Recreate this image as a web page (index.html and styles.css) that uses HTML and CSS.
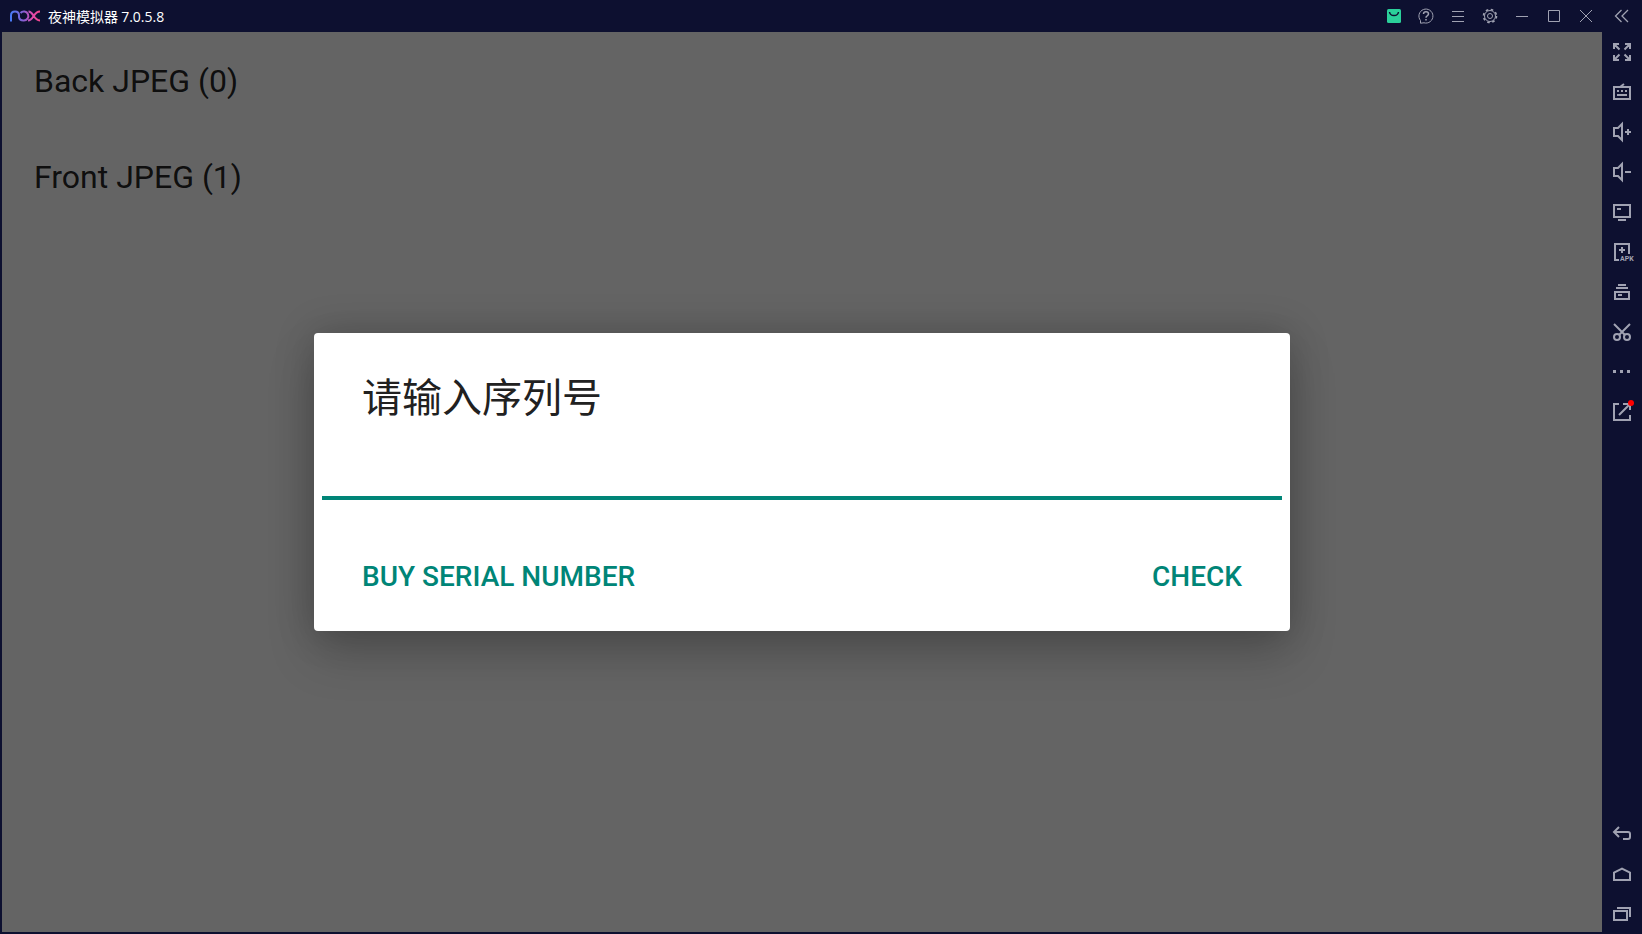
FILE: index.html
```html
<!DOCTYPE html>
<html lang="zh-CN">
<head>
    <meta charset="UTF-8">
    <meta name="viewport" content="width=device-width, initial-scale=1.0">
    <title>夜神模拟器 7.0.5.8</title>
    <link rel="stylesheet" href="styles.css">
</head>
<body>
    <header class="titlebar">
        <svg class="logo" viewBox="0 0 32 14" aria-hidden="true">
            <defs>
                <linearGradient id="nox" gradientUnits="userSpaceOnUse" x1="0" y1="0" x2="32" y2="0">
                    <stop offset="0" stop-color="#3a80ff"/>
                    <stop offset="0.5" stop-color="#8a5fd0"/>
                    <stop offset="0.75" stop-color="#e04aac"/>
                    <stop offset="1" stop-color="#f8468c"/>
                </linearGradient>
            </defs>
            <path d="M3 12.500V6.500Q3 2.500 7 2.500T11 6.500V8Q11.500 11.500 15.500 11.500A4.500 4.500 0 1 0 12.500 4M20.500 2.500C26 2.500 25 11.500 32 11.500M32 2.500C25 2.500 26 11.500 20 11.500" fill="none" stroke="url(#nox)" stroke-width="2"/>
        </svg>
        <h1 class="app-name">夜神模拟器 <span class="version">7.0.5.8</span></h1>
        <div class="window-buttons">
            <button type="button" aria-label="应用中心">
                <svg viewBox="0 0 20 20"><rect x="3" y="3" width="14" height="14" rx="1.500" fill="#2bd09a"/><path d="M5.500 6Q6 9.500 10 9.500T14.500 6" fill="none" stroke="#0d1030" stroke-width="1.500"/></svg>
            </button>
            <button type="button" aria-label="帮助">
                <svg class="thin" viewBox="0 0 20 20"><path d="M4.500 14.500A7 7 0 1 1 8 16.800L4.500 17.200Z"/><path d="M7.500 8Q7.500 5.800 10 5.800T12.500 8Q12.500 9 11.200 9.800Q10 10.500 10 11.800M10 13V14.500" stroke-width="1.500"/></svg>
            </button>
            <button type="button" aria-label="菜单">
                <svg class="thin" viewBox="0 0 20 20"><path d="M4 5.500H16M4 10.500H16M4 15.500H16"/></svg>
            </button>
            <button type="button" aria-label="设置">
                <svg class="thin" viewBox="0 0 20 20"><circle cx="10" cy="10" r="5.500"/><circle cx="10" cy="10" r="2.500"/><circle cx="10" cy="10" r="6.500" stroke-width="1.600" stroke-dasharray="2.550 2.555"/></svg>
            </button>
            <button type="button" aria-label="最小化">
                <svg class="thin" viewBox="0 0 20 20"><path d="M4 10.500H16"/></svg>
            </button>
            <button type="button" aria-label="最大化">
                <svg class="thin" viewBox="0 0 20 20"><path d="M4.500 4.500H15.500V15.500H4.500Z"/></svg>
            </button>
            <button type="button" aria-label="关闭">
                <svg class="thin" viewBox="0 0 20 20"><path d="M4 4L16 16M16 4L4 16"/></svg>
            </button>
            <button type="button" class="collapse" aria-label="收起侧栏">
                <svg class="thin" viewBox="0 0 20 20"><path d="M9.500 4L3.500 10L9.500 16M16 4L10 10L16 16" stroke-width="1.300"/></svg>
            </button>
        </div>
    </header>

    <div class="workspace">
        <main class="screen">
            <ul class="camera-list">
                <li>Back JPEG (0)</li>
                <li>Front JPEG (1)</li>
            </ul>

            <div class="overlay">
                <form class="dialog" role="dialog" aria-labelledby="dialog-title">
                    <label class="dialog-title" id="dialog-title" for="serial">请输入序列号</label>
                    <input class="serial-input" id="serial" type="text">
                    <div class="dialog-actions">
                        <button type="button">BUY SERIAL NUMBER</button>
                        <button type="button">CHECK</button>
                    </div>
                </form>
            </div>
        </main>

        <aside class="sidebar">
            <button type="button" aria-label="全屏">
                <svg viewBox="0 0 20 20"><path d="M2 7V2H7M2 2L7.500 7.500M13 2H18V7M18 2L12.500 7.500M2 13V18H7M2 18L7.500 12.500M18 13V18H13M18 18L12.500 12.500"/></svg>
            </button>
            <button type="button" aria-label="按键设置">
                <svg viewBox="0 0 20 20"><path d="M2 5H18V17H2ZM8 5L12 2M5 9H7M9 9H11M13 9H15M5 13H15"/></svg>
            </button>
            <button type="button" aria-label="音量加">
                <svg viewBox="0 0 20 20"><path d="M10 2V18L6 14H2V6H6ZM13 10H19M16 7V13"/></svg>
            </button>
            <button type="button" aria-label="音量减">
                <svg viewBox="0 0 20 20"><path d="M10 2V18L6 14H2V6H6ZM13 10H19"/></svg>
            </button>
            <button type="button" aria-label="虚拟屏幕">
                <svg viewBox="0 0 20 20"><path d="M2 3H18V15H2ZM5 7H9M6 18H14"/></svg>
            </button>
            <button type="button" aria-label="安装 APK">
                <svg viewBox="0 0 20 20"><path d="M7 18H3V2H17V12M10 5V11M7 8H13"/><text class="apk" x="8" y="19">APK</text></svg>
            </button>
            <button type="button" aria-label="多开">
                <svg viewBox="0 0 20 20"><path d="M6 3H14M4 6H16M3 10H17V17H3ZM6 13H10"/></svg>
            </button>
            <button type="button" aria-label="截图">
                <svg viewBox="0 0 20 20"><path d="M2 2L13 13M18 2L7 13"/><circle cx="5" cy="15" r="3"/><circle cx="15" cy="15" r="3"/></svg>
            </button>
            <button type="button" aria-label="更多">
                <svg viewBox="0 0 20 20"><path d="M1 9.500H4M8 9.500H11M15 9.500H18" stroke-width="3"/></svg>
            </button>
            <button type="button" aria-label="分享">
                <svg viewBox="0 0 20 20"><path d="M7 2H2V18H18V13M11 2H18V8M7 13L17 3"/><circle class="dot" cx="19" cy="1" r="3"/></svg>
            </button>
            <button type="button" class="nav-first" aria-label="返回">
                <svg viewBox="0 0 20 20"><path d="M7 3L2 8L7 13M2 8H16Q18 8 18 10V13Q18 15 16 15H11"/></svg>
            </button>
            <button type="button" aria-label="主页">
                <svg viewBox="0 0 20 20"><path d="M2 16V8.500L10 4.500L18 8.500V16Z"/></svg>
            </button>
            <button type="button" aria-label="最近任务">
                <svg viewBox="0 0 20 20"><path d="M2 7H15V16H2ZM5 4H18V13"/></svg>
            </button>
        </aside>
    </div>
</body>
</html>
```

FILE: styles.css
```css
* {
    box-sizing: border-box;
}
body {
    margin: 0;
    min-height: 100vh;
    display: flex;
    flex-direction: column;
    background: #0d1030;
    font-family: Roboto, "Noto Sans CJK SC", sans-serif;
}
button {
    padding: 0;
    border: none;
    background: none;
    font-family: inherit;
    cursor: pointer;
}

/* Title bar */
.titlebar {
    display: flex;
    align-items: center;
    height: 32px;
    padding-left: 8px;
}
.logo {
    width: 32px;
    height: 14px;
}
.app-name {
    margin: 0 0 0 8px;
    color: #fff;
    font-family: "Noto Sans CJK SC", sans-serif;
    font-size: 14px;
    font-weight: 400;
    line-height: 32px;
}
.version {
    font-family: "Open Sans", sans-serif;
}
.window-buttons {
    display: flex;
    margin-left: auto;
}
.window-buttons button {
    display: flex;
    align-items: center;
    justify-content: center;
    width: 32px;
    height: 32px;
}
.window-buttons .collapse {
    width: 40px;
}
.window-buttons svg,
.sidebar svg {
    width: 20px;
    height: 20px;
    overflow: visible;
}
.thin {
    fill: none;
    stroke: #a0a2b2;
    stroke-width: 1;
}

/* Emulated screen */
.workspace {
    flex: 1;
    display: flex;
}
.screen {
    position: relative;
    flex: 1;
    margin: 0 0 2px 2px;
    background: #fafafa;
}
.camera-list {
    margin: 0;
    padding: 1px 0 0;
    list-style: none;
}
.camera-list li {
    padding: 0 32px;
    color: rgba(0, 0, 0, 0.87);
    font-size: 32px;
    line-height: 96px;
}
.overlay {
    position: absolute;
    inset: 0;
    display: flex;
    align-items: center;
    justify-content: center;
    overflow: hidden;
    background: rgba(0, 0, 0, 0.6);
}

/* Serial number dialog */
.dialog {
    display: flex;
    flex-direction: column;
    width: 61%;
    padding-top: 38px;
    border-radius: 4px;
    background: #fff;
    box-shadow: 0 24px 48px rgba(0, 0, 0, 0.18), 0 0 40px rgba(0, 0, 0, 0.2);
}
.dialog-title {
    padding: 0 48px;
    color: #212121;
    font-size: 40px;
    line-height: 56px;
}
.serial-input {
    height: 73px;
    margin: 0 8px;
    padding: 0 8px;
    border: none;
    border-bottom: 4px solid #008577;
    outline: none;
    background: none;
    color: #212121;
    font-family: inherit;
    font-size: 36px;
}
.dialog-actions {
    display: flex;
    justify-content: space-between;
    padding: 40px 48px 19px;
}
.dialog-actions button {
    height: 72px;
    color: #008577;
    font-size: 28px;
    font-weight: 500;
}

/* Tool sidebar */
.sidebar {
    display: flex;
    flex-direction: column;
    width: 40px;
}
.sidebar button {
    display: flex;
    align-items: center;
    justify-content: center;
    width: 40px;
    height: 40px;
}
.sidebar .nav-first {
    margin-top: auto;
}
.sidebar svg {
    fill: none;
    stroke: #a0a2b2;
    stroke-width: 2;
}
.sidebar .apk {
    fill: #a0a2b2;
    stroke: none;
    font-size: 7px;
    font-weight: 700;
}
.sidebar .dot {
    fill: #f00;
    stroke: none;
}
```
